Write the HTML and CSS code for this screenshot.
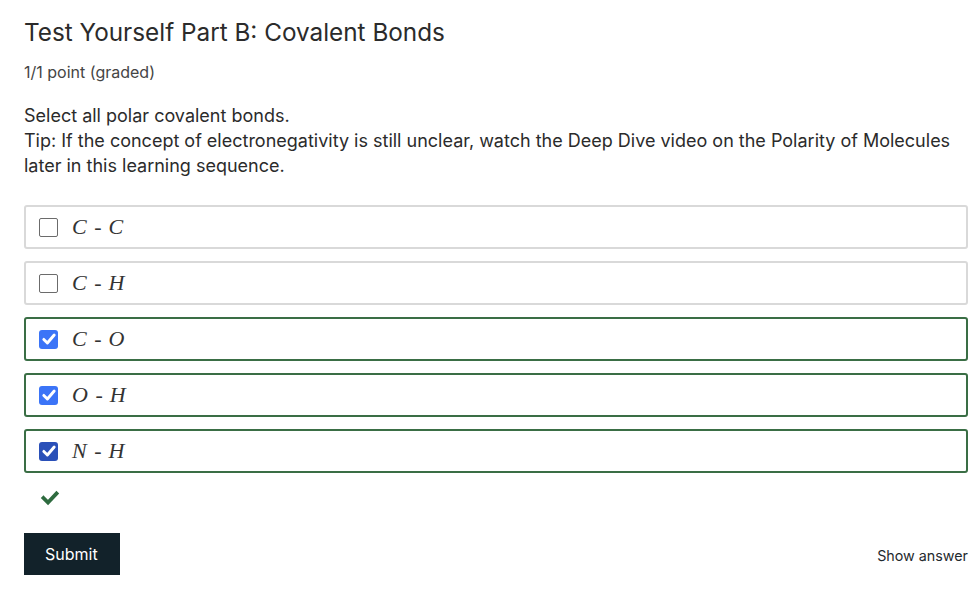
FILE: index.html
```html
<!DOCTYPE html>
<html>
<head>
<meta charset="utf-8">
<link rel="stylesheet" href="styles.css">
</head>
<body>
<div class="problem">
  <h2 class="title">Test Yourself Part B: Covalent Bonds</h2>
  <div class="points">1/1 point (graded)</div>
  <div class="prompt">
    <p>Select all polar covalent bonds.</p>
    <p>Tip: If the concept of electronegativity is still unclear, watch the Deep Dive video on the Polarity of Molecules later in this learning sequence.</p>
  </div>
  <div class="choices">
    <label class="choice">
      <span class="box"></span>
      <span class="math"><i>C</i><span class="op">-</span><i>C</i></span>
    </label>
    <label class="choice">
      <span class="box"></span>
      <span class="math"><i>C</i><span class="op">-</span><i>H</i></span>
    </label>
    <label class="choice correct">
      <span class="box checked"><svg viewBox="0 0 20 20" width="16" height="16"><path d="M3.5 10.5 L8 15 L16.5 5" fill="none" stroke="#fff" stroke-width="3.6" stroke-linecap="round" stroke-linejoin="round"/></svg></span>
      <span class="math"><i>C</i><span class="op">-</span><i>O</i></span>
    </label>
    <label class="choice correct">
      <span class="box checked"><svg viewBox="0 0 20 20" width="16" height="16"><path d="M3.5 10.5 L8 15 L16.5 5" fill="none" stroke="#fff" stroke-width="3.6" stroke-linecap="round" stroke-linejoin="round"/></svg></span>
      <span class="math"><i>O</i><span class="op">-</span><i>H</i></span>
    </label>
    <label class="choice correct">
      <span class="box checked focus"><svg viewBox="0 0 20 20" width="16" height="16"><path d="M3.5 10.5 L8 15 L16.5 5" fill="none" stroke="#fff" stroke-width="3.6" stroke-linecap="round" stroke-linejoin="round"/></svg></span>
      <span class="math"><i>N</i><span class="op">-</span><i>H</i></span>
    </label>
  </div>
  <div class="status">
    <svg viewBox="0 0 20 20" width="20" height="20"><path d="M3.5 10 L8 14.5 L16.5 5.5" fill="none" stroke="#2e6b3f" stroke-width="3.8" stroke-linecap="square" stroke-linejoin="miter"/></svg>
  </div>
  <div class="actions">
    <button class="submit">Submit</button>
    <button class="show">Show answer</button>
  </div>
</div>
</body>
</html>
```

FILE: styles.css
```css
html, body {
  margin: 0;
  padding: 0;
  background: #fff;
}
body {
  font-family: Inter, "Noto Sans", sans-serif;
  color: #2b2b2b;
}
.problem {
  padding: 17px 12px 0 24px;
}
.title {
  margin: 0;
  font-size: 24.3px;
  font-weight: 400;
  line-height: 30px;
  color: #2b2b2b;
}
.points {
  margin-top: 14px;
  font-size: 16px;
  line-height: 22px;
  color: #454545;
}
.prompt {
  margin-top: 20px;
  font-size: 18px;
  line-height: 25px;
  color: #2b2b2b;
}
.prompt p {
  margin: 0;
}
.choices {
  margin-top: 27px;
  display: flex;
  flex-direction: column;
  gap: 12px;
}
.choice {
  display: flex;
  align-items: center;
  height: 44px;
  box-sizing: border-box;
  border: 2px solid #d9d9d9;
  border-radius: 3px;
  padding-left: 13px;
}
.choice.correct {
  border-color: #3a6e45;
}
.box {
  width: 19px;
  height: 19px;
  box-sizing: border-box;
  border: 1px solid #6b6b6b;
  border-radius: 2px;
  display: flex;
  align-items: center;
  justify-content: center;
  background: #fff;
}
.box.checked {
  border: none;
  background: #3b74f7;
  border-radius: 3px;
}
.box.checked.focus {
  background: #2a50b8;
}
.math {
  margin-left: 14px;
  font-family: "Liberation Serif", "DejaVu Serif", serif;
  font-size: 22px;
  color: #333;
  display: flex;
  align-items: baseline;
}
.math i {
  font-style: italic;
  letter-spacing: 0.5px;
}
.op {
  font-style: normal;
  margin: 0 7px 0 7px;
}
.status {
  height: 20px;
  margin-top: 15px;
  padding-left: 16px;
}
.actions {
  margin-top: 25px;
  display: flex;
  justify-content: space-between;
  align-items: center;
}
.submit {
  background: #12222a;
  color: #fff;
  border: none;
  border-radius: 0;
  font-family: Inter, "Noto Sans", sans-serif;
  font-size: 16px;
  height: 42px;
  padding: 0 22px 0 21px;
}
.show {
  background: none;
  border: none;
  padding: 0;
  font-family: Inter, "Noto Sans", sans-serif;
  font-size: 14.3px;
  color: #1f2a2e;
  margin-top: 2px;
}
```
